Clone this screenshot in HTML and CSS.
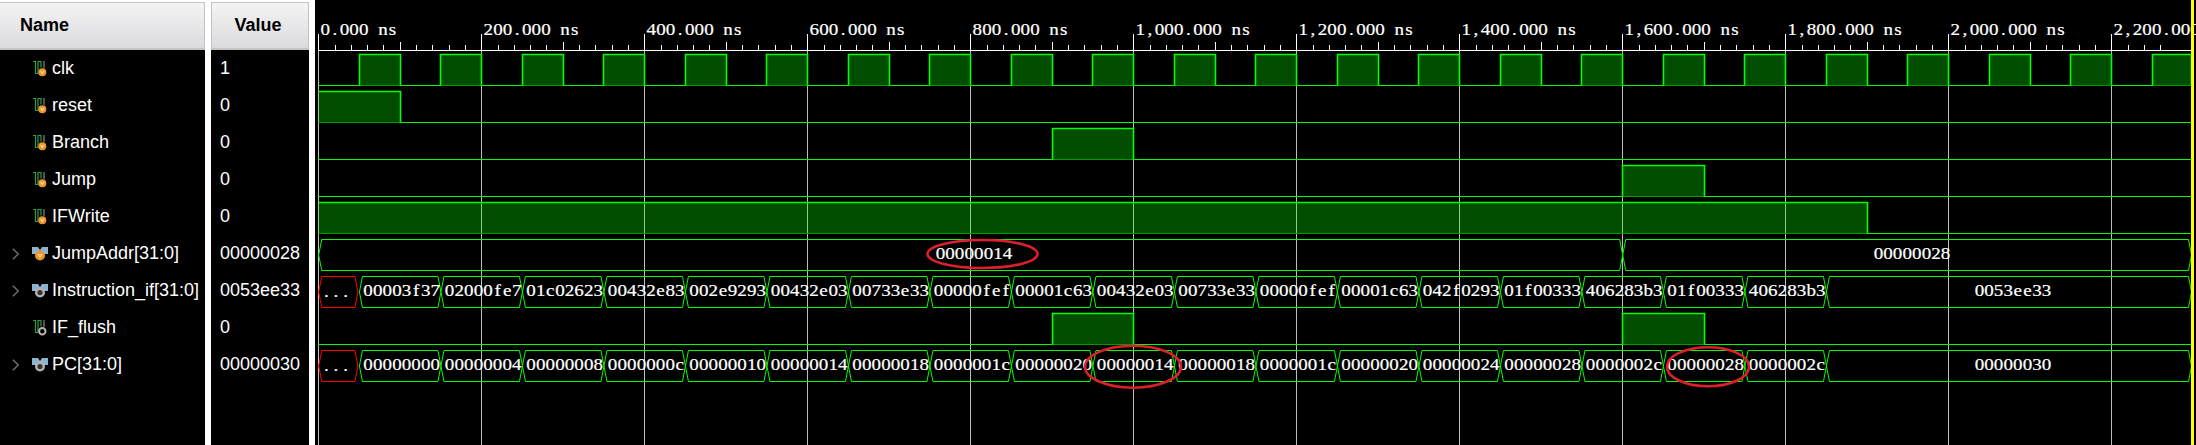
FILE: index.html
```html
<!DOCTYPE html>
<html lang="en">
<head>
    <meta charset="UTF-8">
    <title>Simulation waveform</title>
    <link rel="stylesheet" href="styles.css">
</head>
<body>
    <svg class="defs">
        <symbol id="bit-in" viewBox="0 0 16 18">
            <path d="M1 1.5h2.5v12h2.5v-12h3v6" fill="none" stroke="#2f9d45" stroke-width="1.2"/>
            <path d="M12 1v7" fill="none" stroke="#7d8f80" stroke-width="1.2"/>
            <circle cx="10.3" cy="12.2" r="4" fill="#f0952a"/>
            <path d="M8.8 10.8l1.5 3 1.5-3" fill="none" stroke="#fff2d8" stroke-width="1"/>
        </symbol>
        <symbol id="bit-int" viewBox="0 0 16 18">
            <path d="M1 1.5h2.5v12h2.5v-12h3v6" fill="none" stroke="#2f9d45" stroke-width="1.2"/>
            <path d="M12 1v7" fill="none" stroke="#7d8f80" stroke-width="1.2"/>
            <circle cx="10.3" cy="12.2" r="3.2" fill="none" stroke="#b4b4b4" stroke-width="2"/>
        </symbol>
        <symbol id="bus-in" viewBox="0 0 16 18">
            <path d="M0 2h6l2 3 2-3h6v7h-16z" fill="#8db3cf"/>
            <circle cx="8" cy="10.5" r="5" fill="#f0952a"/>
            <path d="M6.2 8.8l1.8 3.4 1.8-3.4" fill="none" stroke="#fff2d8" stroke-width="1"/>
        </symbol>
        <symbol id="bus-int" viewBox="0 0 16 18">
            <path d="M0 2h6l2 3 2-3h6v7h-16z" fill="#8db3cf"/>
            <circle cx="8" cy="10.5" r="3.8" fill="#333" stroke="#b4b4b4" stroke-width="2.4"/>
        </symbol>
        <symbol id="chevron" viewBox="0 0 9 14">
            <path d="M1 1l6 6-6 6" fill="none" stroke="#707070" stroke-width="1.6"/>
        </symbol>
    </svg>

    <div class="panel name-panel">
        <div class="head name-head">Name</div>
        <div class="list">
            <div class="row"><span class="twist"></span><svg class="ico"><use href="#bit-in"/></svg><span>clk</span></div>
            <div class="row"><span class="twist"></span><svg class="ico"><use href="#bit-in"/></svg><span>reset</span></div>
            <div class="row"><span class="twist"></span><svg class="ico"><use href="#bit-in"/></svg><span>Branch</span></div>
            <div class="row"><span class="twist"></span><svg class="ico"><use href="#bit-in"/></svg><span>Jump</span></div>
            <div class="row"><span class="twist"></span><svg class="ico"><use href="#bit-in"/></svg><span>IFWrite</span></div>
            <div class="row"><svg class="twist"><use href="#chevron"/></svg><svg class="ico"><use href="#bus-in"/></svg><span>JumpAddr[31:0]</span></div>
            <div class="row"><svg class="twist"><use href="#chevron"/></svg><svg class="ico"><use href="#bus-int"/></svg><span>Instruction_if[31:0]</span></div>
            <div class="row"><span class="twist"></span><svg class="ico"><use href="#bit-int"/></svg><span>IF_flush</span></div>
            <div class="row"><svg class="twist"><use href="#chevron"/></svg><svg class="ico"><use href="#bus-int"/></svg><span>PC[31:0]</span></div>
        </div>
    </div>

    <div class="panel value-panel">
        <div class="head value-head">Value</div>
        <div class="list">
            <div class="row val">1</div>
            <div class="row val">0</div>
            <div class="row val">0</div>
            <div class="row val">0</div>
            <div class="row val">0</div>
            <div class="row val">00000028</div>
            <div class="row val">0053ee33</div>
            <div class="row val">0</div>
            <div class="row val">00000030</div>
        </div>
    </div>

    <svg id="wave" class="wave" viewBox="315 0 1881 445"></svg>

    <script src="wave.js"></script>
</body>
</html>
```

FILE: styles.css
```css
html, body {
    margin: 0;
    height: 100%;
    background-color: #fff;
    overflow: hidden;
}
body {
    display: flex;
    gap: 6px;
    font-family: "Liberation Sans", Arial, sans-serif;
    font-size: 18px;
    color: #fff;
}
.defs {
    display: none;
}
.panel {
    display: flex;
    flex-direction: column;
    padding-top: 2px;
}
.name-panel {
    width: 205px;
}
.value-panel {
    width: 98px;
}
.head {
    box-sizing: border-box;
    height: 48px;
    line-height: 44px;
    font-weight: bold;
    color: #000;
    background: linear-gradient(#f3f3f3, #dcdce0);
    border-top: 1px solid #c4c4c4;
    border-bottom: 2px solid #c4c4c4;
    border-right: 1px solid #c4c4c4;
}
.name-head {
    padding-left: 20px;
}
.value-head {
    text-align: center;
    padding-right: 4px;
    border-left: 1px solid #c4c4c4;
}
.list {
    flex: 1;
    background-color: #000;
}
.row {
    display: flex;
    align-items: center;
    gap: 4px;
    height: 37px;
    padding-left: 12px;
    white-space: nowrap;
}
.row.val {
    padding-left: 9px;
}
.twist {
    width: 8px;
    height: 14px;
    margin-right: 8px;
}
.ico {
    width: 16px;
    height: 18px;
}
.wave {
    flex: 1;
    display: block;
    height: 445px;
    background-color: #000;
}
.bus-text, .axis-text {
    font-family: "Liberation Serif", serif;
    font-size: 17px;
    fill: #fff;
    stroke: #fff;
    stroke-width: 0.2;
    text-anchor: middle;
}
```

FILE: wave.js
```js
const svg = document.getElementById('wave');
const X0 = 318.7, SCALE = 0.815, RIGHT = 2191;
const PITCH = 9.6, WIDEN = 1.12;
const GREEN = '#00ff00';

function x(ns) {
    return Math.min(X0 + ns * SCALE, RIGHT);
}

function snap(v) {
    return Math.round(v - 0.5) + 0.5;
}

function add(tag, attrs, text) {
    const el = document.createElementNS('http://www.w3.org/2000/svg', tag);
    for (const k in attrs) el.setAttribute(k, attrs[k]);
    if (text) el.textContent = text;
    svg.appendChild(el);
    return el;
}

function line(x1, y1, x2, y2, stroke, width) {
    add('line', { x1, y1, x2, y2, stroke, 'stroke-width': width || 1 });
}

// each char sits in its own fixed cell and is a bit wider than the font draws it
function label(str, first, y, cls) {
    const xs = [];
    for (let i = 0; i < str.length; i++) xs.push(((first + i * PITCH) / WIDEN).toFixed(2));
    add('text', { x: xs.join(' '), y, class: cls, transform: `scale(${WIDEN} 1)` }, str);
}

function centered(str, cx, y) {
    label(str, cx - (str.length - 1) * PITCH / 2, y, 'bus-text');
}

// Ruler and grid
line(318, 50.5, RIGHT, 50.5, '#fff');
for (let ns = 0; ns <= 2260; ns += 20) {
    const p = snap(x(ns));
    if (ns % 200 === 0) {
        line(p, 51, p, 445, '#bdbdbd');
        line(p, 34, p, 50, '#fff');
        const text = ns.toLocaleString('en-US') + '.000 ns';
        label(text, p + 6.8, 35, 'axis-text');
    } else if (ns % 100 === 0) {
        line(p, 42, p, 50, '#fff');
    } else {
        line(p, 45, p, 50, '#fff');
    }
}

// One bit signals, as lists of [from, to] in ns
const clk = [];
for (let ns = 50; ns < 2300; ns += 100) clk.push([ns, ns + 50]);

const bits = [
    [0, clk],
    [1, [[0, 100]]],
    [2, [[900, 1000]]],
    [3, [[1600, 1700]]],
    [4, [[0, 1900]]],
    [7, [[900, 1000], [1600, 1700]]]
];

bits.forEach(([row, spans]) => {
    const top = 54.5 + 37 * row, low = 85.5 + 37 * row;
    line(318, low, RIGHT, low, GREEN);
    spans.forEach(([from, to]) => {
        const a = snap(x(from)), b = snap(x(to));
        add('rect', { x: a, y: top, width: b - a, height: low - top, fill: 'rgba(0, 255, 0, 0.3)' });
        line(a, low, b, low, '#009a00');
        const d = from === 0
            ? `M${a} ${top}H${b}V${low}`
            : `M${a} ${low}V${top}H${b}V${low}`;
        add('path', { d, fill: 'none', stroke: GREEN, 'stroke-width': 1.6 });
    });
});

// Bus signals, hex shapes
function hex(row, a, b, color) {
    const top = 54.5 + 37 * row, bot = 85.5 + 37 * row, mid = (top + bot) / 2;
    const d = `M${a} ${mid}L${a + 3} ${top}H${b - 3}L${b} ${mid}L${b - 3} ${bot}H${a + 3}Z`;
    add('path', { d, fill: 'none', stroke: color });
}

function busRow(row, values, last) {
    hex(row, X0, x(50) - 1.5, '#ff0000');
    centered('...', 336, 75 + 37 * row);
    values.forEach((v, i) => {
        const from = 50 + i * 100, a = x(from), b = x(from + 100);
        hex(row, a, b, GREEN);
        centered(v, (a + b) / 2 + 1.5, 74 + 37 * row);
    });
    hex(row, x(50 + values.length * 100), RIGHT + 0.5, GREEN);
    centered(last, 2013, 74 + 37 * row);
}

hex(5, X0, x(1600), GREEN);
hex(5, x(1600), RIGHT + 0.5, GREEN);
centered('00000014', 974, 259);
centered('00000028', 1912, 259);

busRow(6, [
    '00003f37', '02000fe7', '01c02623', '00432e83', '002e9293', '00432e03',
    '00733e33', '00000fef', '00001c63', '00432e03', '00733e33', '00000fef',
    '00001c63', '042f0293', '01f00333', '406283b3', '01f00333', '406283b3'
], '0053ee33');

busRow(8, [
    '00000000', '00000004', '00000008', '0000000c', '00000010', '00000014',
    '00000018', '0000001c', '00000020', '00000014', '00000018', '0000001c',
    '00000020', '00000024', '00000028', '0000002c', '00000028', '0000002c'
], '00000030');

// Red hand drawn marks
const marks = [[982.5, 254, 55, 14], [1133, 366.7, 48, 21], [1708, 366.7, 41, 19.5]];
marks.forEach(([cx, cy, rx, ry]) => {
    add('ellipse', { cx, cy, rx, ry, fill: 'none', stroke: '#dc1f2a', 'stroke-width': 2.6 });
});

// Cursor
add('rect', { x: 2191, y: 0, width: 3, height: 445, fill: '#ffff00' });
```
